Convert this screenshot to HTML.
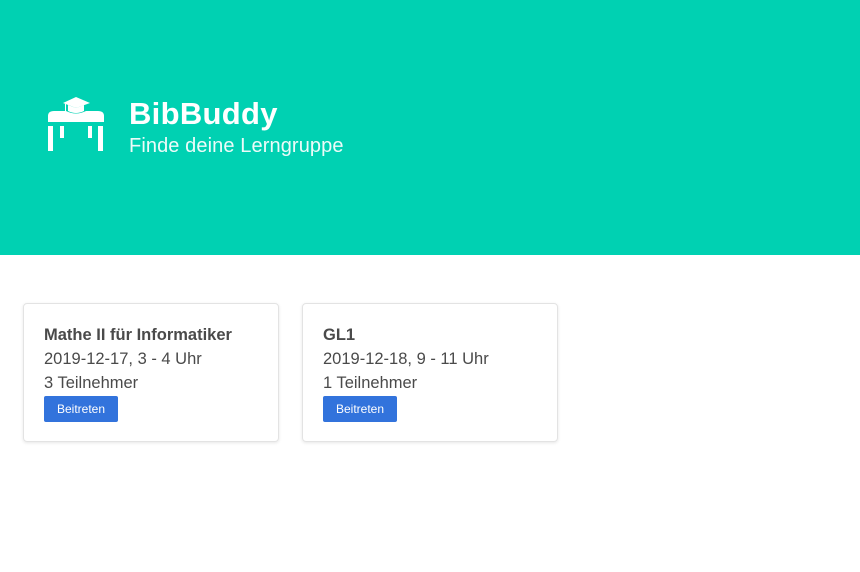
<!DOCTYPE html>
<html><head><style>
body{margin:0;width:860px;height:572px;background:#fff;font-family:"Liberation Sans",sans-serif;overflow:hidden}
.hero{position:absolute;left:0;top:0;width:860px;height:255px;background:#00d1b2}
.t1{position:absolute;left:129px;top:96px;font-size:31px;font-weight:bold;color:#fff;letter-spacing:0.3px}
.t2{position:absolute;left:129px;top:135px;font-size:20px;color:#fff;opacity:.93;letter-spacing:0.1px}
.card{position:absolute;top:303px;width:254px;height:137px;border:1px solid #e3e3e3;border-radius:4px;box-shadow:0 1px 3px rgba(10,10,10,.1);color:#4a4a4a;font-size:16.5px}
.card .a{position:absolute;left:20px;top:22px;font-weight:bold}
.card .b{position:absolute;left:20px;top:46px}
.card .c{position:absolute;left:20px;top:70px}
.btn{position:absolute;left:20px;top:92px;width:74px;height:26px;background:#3273dc;color:#fff;font-size:12px;line-height:26px;text-align:center;border-radius:2px}
</style></head><body>
<div class="hero">
<svg style="position:absolute;left:46px;top:94px" width="62" height="60" viewBox="46 94 62 60" fill="#fff">
<path d="M63 103 L76 97 L90 103 L76 108 Z"/>
<path d="M68 105 L68 111 Q76 115 84 111 L84 105 L76 108 Z"/>
<rect x="65" y="104" width="1" height="8"/>
<path d="M48 122 L48 116 Q48 111 54 111 L66 111 Q76 116 86 111 L98 111 Q104 111 104 116 L104 122 Z"/>
<rect x="48" y="126" width="5" height="25"/>
<rect x="60" y="126" width="4" height="12"/>
<rect x="88" y="126" width="4" height="12"/>
<rect x="98" y="126" width="5" height="25"/>
</svg>
<div class="t1">BibBuddy</div>
<div class="t2">Finde deine Lerngruppe</div>
</div>
<div class="card" style="left:23px"><div class="a">Mathe II für Informatiker</div><div class="b">2019-12-17, 3 - 4 Uhr</div><div class="c">3 Teilnehmer</div><div class="btn">Beitreten</div></div>
<div class="card" style="left:302px"><div class="a">GL1</div><div class="b">2019-12-18, 9 - 11 Uhr</div><div class="c">1 Teilnehmer</div><div class="btn">Beitreten</div></div>
</body></html>
